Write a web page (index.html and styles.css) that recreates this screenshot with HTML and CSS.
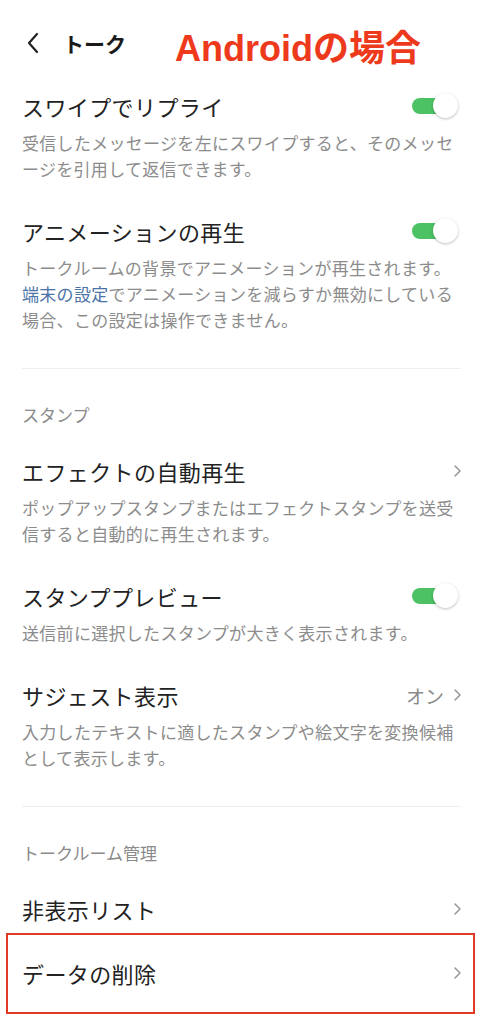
FILE: index.html
```
<!DOCTYPE html>
<html lang="ja">
<head>
    <meta charset="utf-8">
    <meta name="viewport" content="width=device-width, initial-scale=1">
    <link rel="stylesheet" href="styles.css">
</head>
<body>
    <div class="page">
        <header class="topbar">
            <svg class="back" width="18" height="24" viewBox="0 0 18 24">
                <polyline points="13,3 5,12 13,21" fill="none" stroke="#222" stroke-width="2.2" stroke-linecap="round" stroke-linejoin="round"/>
            </svg>
            <span class="topbar-title">トーク</span>
            <span class="note">Androidの場合</span>
        </header>

        <div class="item">
            <div class="item-head">
                <span class="item-title">スワイプでリプライ</span>
                <span class="toggle"></span>
            </div>
            <p class="item-desc">受信したメッセージを左にスワイプすると、そのメッセージを引用して返信できます。</p>
        </div>

        <div class="item">
            <div class="item-head">
                <span class="item-title">アニメーションの再生</span>
                <span class="toggle"></span>
            </div>
            <p class="item-desc">トークルームの背景でアニメーションが再生されます。<span class="link">端末の設定</span>でアニメーションを減らすか無効にしている場合、この設定は操作できません。</p>
        </div>

        <hr class="divider">

        <div class="section-label">スタンプ</div>

        <div class="item">
            <div class="item-head">
                <span class="item-title">エフェクトの自動再生</span>
                <svg class="chevron" width="10" height="14" viewBox="0 0 10 14">
                    <polyline points="3,2 8,7 3,12" fill="none" stroke="#9a9a9a" stroke-width="1.6" stroke-linecap="round" stroke-linejoin="round"/>
                </svg>
            </div>
            <p class="item-desc">ポップアップスタンプまたはエフェクトスタンプを送受信すると自動的に再生されます。</p>
        </div>

        <div class="item">
            <div class="item-head">
                <span class="item-title">スタンププレビュー</span>
                <span class="toggle"></span>
            </div>
            <p class="item-desc">送信前に選択したスタンプが大きく表示されます。</p>
        </div>

        <div class="item">
            <div class="item-head">
                <span class="item-title">サジェスト表示</span>
                <span class="item-value">オン
                    <svg class="chevron" width="10" height="14" viewBox="0 0 10 14">
                        <polyline points="3,2 8,7 3,12" fill="none" stroke="#9a9a9a" stroke-width="1.6" stroke-linecap="round" stroke-linejoin="round"/>
                    </svg>
                </span>
            </div>
            <p class="item-desc">入力したテキストに適したスタンプや絵文字を変換候補として表示します。</p>
        </div>

        <hr class="divider">

        <div class="section-label">トークルーム管理</div>

        <div class="item">
            <div class="item-head">
                <span class="item-title">非表示リスト</span>
                <svg class="chevron" width="10" height="14" viewBox="0 0 10 14">
                    <polyline points="3,2 8,7 3,12" fill="none" stroke="#9a9a9a" stroke-width="1.6" stroke-linecap="round" stroke-linejoin="round"/>
                </svg>
            </div>
        </div>

        <div class="item marked">
            <div class="item-head">
                <span class="item-title">データの削除</span>
                <svg class="chevron" width="10" height="14" viewBox="0 0 10 14">
                    <polyline points="3,2 8,7 3,12" fill="none" stroke="#9a9a9a" stroke-width="1.6" stroke-linecap="round" stroke-linejoin="round"/>
                </svg>
            </div>
        </div>
    </div>
</body>
</html>
```

FILE: styles.css
```
body {
    margin: 0;
    background: #fff;
    font-family: "Noto Sans CJK JP", "Noto Sans", sans-serif;
    color: #222;
}

.page {
    min-height: 1024px;
    padding: 0 22px;
    box-sizing: border-box;
}

/* ヘッダー */
.topbar {
    height: 74px;
    padding-top: 12px;
    box-sizing: border-box;
    display: flex;
    align-items: center;
}

.back {
    margin-left: 2px;
    margin-right: 21px;
}

.topbar-title {
    font-size: 21px;
    font-weight: 700;
    color: #1a1a1a;
}

.note {
    margin-left: 49px;
    margin-top: 4px;
    font-family: "Liberation Sans", "Noto Sans CJK JP", sans-serif;
    font-size: 36px;
    font-weight: 700;
    color: #ee3a1c;
}

/* 設定の行 */
.item {
    padding: 17px 0;
}

.item-head {
    display: flex;
    align-items: center;
    justify-content: space-between;
    height: 30px;
}

.item-title {
    font-size: 22px;
    letter-spacing: 0.4px;
    color: #222;
}

.item-desc {
    margin: 9px 0 0;
    font-size: 17px;
    line-height: 26px;
    letter-spacing: 0.3px;
    color: #8c8c8c;
}

.link {
    color: #4b73a8;
}

.item-value {
    display: flex;
    align-items: center;
    gap: 8px;
    font-size: 19px;
    color: #8a8a8a;
}

.chevron {
    margin-right: -1px;
}

/* トグル */
.toggle {
    position: relative;
    width: 46px;
    height: 26px;
    margin-right: 3px;
}

.toggle:before {
    content: "";
    position: absolute;
    left: 0;
    top: 5px;
    width: 36px;
    height: 16px;
    border-radius: 8px;
    background: #4cc264;
}

.toggle:after {
    content: "";
    position: absolute;
    right: 0;
    top: 0;
    width: 25px;
    height: 25px;
    border-radius: 50%;
    background: #fff;
    box-shadow: 0 1px 3px rgba(0, 0, 0, 0.25);
}

.divider {
    margin: 18px 0 0;
    border: 0;
    border-top: 1px solid #efefef;
}

.section-label {
    margin: 35px 0 13px;
    font-size: 17px;
    line-height: 22px;
    color: #8a8a8a;
}

/* 赤い囲み */
.marked {
    position: relative;
}

.marked:after {
    content: "";
    position: absolute;
    left: -16px;
    right: -14px;
    top: -8px;
    bottom: -9px;
    border: 2px solid #e23a22;
}
```
